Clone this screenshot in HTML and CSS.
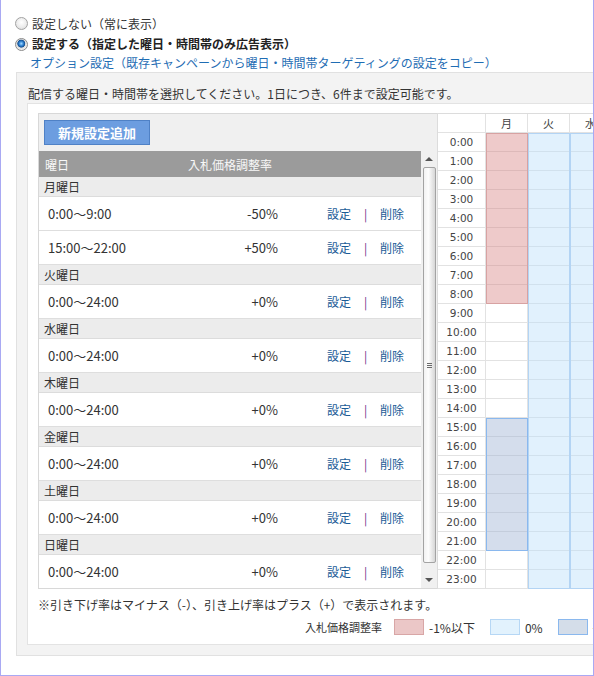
FILE: index.html
```html
<!DOCTYPE html>
<html lang="ja">
<head>
<meta charset="utf-8">
<title>曜日・時間帯設定</title>
<link rel="stylesheet" href="styles.css">
</head>
<body>
<div class="frame">
  <div class="opts">
    <label class="opt"><span class="radio"></span>設定しない（常に表示）</label>
    <label class="opt sel"><span class="radio on"></span>設定する（指定した曜日・時間帯のみ広告表示）</label>
    <a class="copy" href="#">オプション設定（既存キャンペーンから曜日・時間帯ターゲティングの設定をコピー）</a>
  </div>
  <div class="box">
    <p class="intro">配信する曜日・時間帯を選択してください。1日につき、6件まで設定可能です。</p>
    <div class="inner">
      <div class="main">
        <div class="listpanel">
          <div class="toolbar"><button class="add">新規設定追加</button></div>
          <div class="listwrap">
            <div class="list">
              <div class="lhead"><span class="lh1">曜日</span><span>入札価格調整率</span></div>
              <div class="day">月曜日</div>
              <div class="row"><span class="t">0:00〜9:00</span><span class="r">-50%</span><a class="lk" href="#">設定</a><span class="sep">|</span><a class="lk2" href="#">削除</a></div>
              <div class="row"><span class="t">15:00〜22:00</span><span class="r">+50%</span><a class="lk" href="#">設定</a><span class="sep">|</span><a class="lk2" href="#">削除</a></div>
              <div class="day">火曜日</div>
              <div class="row"><span class="t">0:00〜24:00</span><span class="r">+0%</span><a class="lk" href="#">設定</a><span class="sep">|</span><a class="lk2" href="#">削除</a></div>
              <div class="day">水曜日</div>
              <div class="row"><span class="t">0:00〜24:00</span><span class="r">+0%</span><a class="lk" href="#">設定</a><span class="sep">|</span><a class="lk2" href="#">削除</a></div>
              <div class="day">木曜日</div>
              <div class="row"><span class="t">0:00〜24:00</span><span class="r">+0%</span><a class="lk" href="#">設定</a><span class="sep">|</span><a class="lk2" href="#">削除</a></div>
              <div class="day">金曜日</div>
              <div class="row"><span class="t">0:00〜24:00</span><span class="r">+0%</span><a class="lk" href="#">設定</a><span class="sep">|</span><a class="lk2" href="#">削除</a></div>
              <div class="day">土曜日</div>
              <div class="row"><span class="t">0:00〜24:00</span><span class="r">+0%</span><a class="lk" href="#">設定</a><span class="sep">|</span><a class="lk2" href="#">削除</a></div>
              <div class="day">日曜日</div>
              <div class="row"><span class="t">0:00〜24:00</span><span class="r">+0%</span><a class="lk" href="#">設定</a><span class="sep">|</span><a class="lk2" href="#">削除</a></div>
            </div>
            <div class="sbar">
              <div class="arr"><span class="tri-up"></span></div>
              <div class="thumb"><span class="grip"></span></div>
              <div class="track"></div>
              <div class="arr"><span class="tri-dn"></span></div>
            </div>
          </div>
        </div>
        <div class="grid">
          <span class="hd"></span><span class="hd">月</span><span class="hd">火</span><span class="hd">水</span><span class="hd">木</span><span class="hd">金</span><span class="hd">土</span><span class="hd">日</span>
          <span class="tm">0:00</span><span class="c"></span><span class="c"></span><span class="c"></span><span class="c"></span><span class="c"></span><span class="c"></span><span class="c"></span>
          <span class="tm">1:00</span><span class="c"></span><span class="c"></span><span class="c"></span><span class="c"></span><span class="c"></span><span class="c"></span><span class="c"></span>
          <span class="tm">2:00</span><span class="c"></span><span class="c"></span><span class="c"></span><span class="c"></span><span class="c"></span><span class="c"></span><span class="c"></span>
          <span class="tm">3:00</span><span class="c"></span><span class="c"></span><span class="c"></span><span class="c"></span><span class="c"></span><span class="c"></span><span class="c"></span>
          <span class="tm">4:00</span><span class="c"></span><span class="c"></span><span class="c"></span><span class="c"></span><span class="c"></span><span class="c"></span><span class="c"></span>
          <span class="tm">5:00</span><span class="c"></span><span class="c"></span><span class="c"></span><span class="c"></span><span class="c"></span><span class="c"></span><span class="c"></span>
          <span class="tm">6:00</span><span class="c"></span><span class="c"></span><span class="c"></span><span class="c"></span><span class="c"></span><span class="c"></span><span class="c"></span>
          <span class="tm">7:00</span><span class="c"></span><span class="c"></span><span class="c"></span><span class="c"></span><span class="c"></span><span class="c"></span><span class="c"></span>
          <span class="tm">8:00</span><span class="c"></span><span class="c"></span><span class="c"></span><span class="c"></span><span class="c"></span><span class="c"></span><span class="c"></span>
          <span class="tm">9:00</span><span class="c"></span><span class="c"></span><span class="c"></span><span class="c"></span><span class="c"></span><span class="c"></span><span class="c"></span>
          <span class="tm">10:00</span><span class="c"></span><span class="c"></span><span class="c"></span><span class="c"></span><span class="c"></span><span class="c"></span><span class="c"></span>
          <span class="tm">11:00</span><span class="c"></span><span class="c"></span><span class="c"></span><span class="c"></span><span class="c"></span><span class="c"></span><span class="c"></span>
          <span class="tm">12:00</span><span class="c"></span><span class="c"></span><span class="c"></span><span class="c"></span><span class="c"></span><span class="c"></span><span class="c"></span>
          <span class="tm">13:00</span><span class="c"></span><span class="c"></span><span class="c"></span><span class="c"></span><span class="c"></span><span class="c"></span><span class="c"></span>
          <span class="tm">14:00</span><span class="c"></span><span class="c"></span><span class="c"></span><span class="c"></span><span class="c"></span><span class="c"></span><span class="c"></span>
          <span class="tm">15:00</span><span class="c"></span><span class="c"></span><span class="c"></span><span class="c"></span><span class="c"></span><span class="c"></span><span class="c"></span>
          <span class="tm">16:00</span><span class="c"></span><span class="c"></span><span class="c"></span><span class="c"></span><span class="c"></span><span class="c"></span><span class="c"></span>
          <span class="tm">17:00</span><span class="c"></span><span class="c"></span><span class="c"></span><span class="c"></span><span class="c"></span><span class="c"></span><span class="c"></span>
          <span class="tm">18:00</span><span class="c"></span><span class="c"></span><span class="c"></span><span class="c"></span><span class="c"></span><span class="c"></span><span class="c"></span>
          <span class="tm">19:00</span><span class="c"></span><span class="c"></span><span class="c"></span><span class="c"></span><span class="c"></span><span class="c"></span><span class="c"></span>
          <span class="tm">20:00</span><span class="c"></span><span class="c"></span><span class="c"></span><span class="c"></span><span class="c"></span><span class="c"></span><span class="c"></span>
          <span class="tm">21:00</span><span class="c"></span><span class="c"></span><span class="c"></span><span class="c"></span><span class="c"></span><span class="c"></span><span class="c"></span>
          <span class="tm">22:00</span><span class="c"></span><span class="c"></span><span class="c"></span><span class="c"></span><span class="c"></span><span class="c"></span><span class="c"></span>
          <span class="tm">23:00</span><span class="c"></span><span class="c"></span><span class="c"></span><span class="c"></span><span class="c"></span><span class="c"></span><span class="c"></span>
          <span class="blk neg" style="grid-column:2 / span 1;grid-row:2 / span 9"></span>
          <span class="blk pos" style="grid-column:2 / span 1;grid-row:17 / span 7"></span>
          <span class="blk zero" style="grid-column:3 / span 1;grid-row:2 / span 24"></span>
          <span class="blk zero" style="grid-column:4 / span 1;grid-row:2 / span 24"></span>
          <span class="blk zero" style="grid-column:5 / span 1;grid-row:2 / span 24"></span>
          <span class="blk zero" style="grid-column:6 / span 1;grid-row:2 / span 24"></span>
          <span class="blk zero" style="grid-column:7 / span 1;grid-row:2 / span 24"></span>
          <span class="blk zero" style="grid-column:8 / span 1;grid-row:2 / span 24"></span>
        </div>
      </div>
      <p class="note">※引き下げ率はマイナス（-）、引き上げ率はプラス（+）で表示されます。</p>
      <div class="legend">
        <span class="lg-label">入札価格調整率</span>
        <span class="sw sw-neg"></span><span class="lg-txt">-1%以下</span>
        <span class="sw sw-zero"></span><span class="lg-txt">0%</span>
        <span class="sw sw-pos"></span><span class="lg-txt">+1%以上</span>
      </div>
    </div>
  </div>
</div>
</body>
</html>
```

FILE: styles.css
```css
* { box-sizing: border-box; }
html, body { margin: 0; padding: 0; background: #fff; }
body {
  font-family: "Noto Sans CJK JP", "Noto Sans", sans-serif;
  font-size: 12px;
  color: #333;
}
.frame {
  width: 594px;
  height: 676px;
  border: 1px solid #a9a9f3;
  border-top: none;
  overflow: hidden;
}

/* options */
.opts { padding-top: 13px; }
.opt {
  display: flex;
  align-items: center;
  gap: 4px;
  height: 21px;
  padding-left: 14px;
  line-height: 18px;
}
.opt.sel { height: 20px; font-weight: bold; color: #222; }
.radio {
  width: 13px;
  height: 13px;
  border-radius: 50%;
  border: 1px solid #a2a2a2;
  background: radial-gradient(circle at 50% 40%, #ffffff 0, #ececec 55%, #d4d4d4 100%);
  flex: none;
}
.radio.on {
  border-color: #8a8a8a;
  background: radial-gradient(circle at 48% 42%, #a8dcff 0, #3d8fdc 22%, #124f92 42%, #dcdcdc 50%, #f2f2f2 72%, #d0d0d0 100%);
}
.copy {
  display: block;
  height: 18px;
  line-height: 18px;
  padding-left: 29px;
  color: #1f6db4;
  text-decoration: none;
}

/* outer box */
.box {
  width: 800px;
  margin-left: 15px;
  border: 1px solid #e1e1e1;
  background: #f3f3f3;
  padding: 11px 0 10px 10px;
}
.intro { margin: 0; padding-left: 1px; line-height: 19px; }
.inner {
  background: #fff;
  border: 1px solid #e3e3e3;
  padding: 9px 10px 8px;
}
.main { display: flex; align-items: flex-start; }

/* list panel */
.listpanel {
  width: 399px;
  flex: none;
  background: #f0f0f0;
  border: 1px solid #d8d8d8;
  border-right: none;
}
.toolbar { height: 37px; padding: 6px 5px; }
.add {
  display: block;
  width: 106px;
  height: 25px;
  padding: 0;
  border: 1px solid #4f81c6;
  background: #6c9de0;
  color: #fff;
  font-family: inherit;
  font-size: 13px;
  font-weight: bold;
  line-height: 23px;
  text-align: center;
}
.listwrap { display: flex; height: 437px; }
.list { width: 382px; flex: none; overflow: hidden; background: #fff; }
.lhead {
  display: flex;
  align-items: center;
  height: 26px;
  padding-left: 6px;
  background: #9b9b9b;
  color: #f8f8f8;
}
.lh1 { width: 143px; }
.day {
  height: 20px;
  line-height: 19px;
  padding-left: 5px;
  background: #ececec;
  border-bottom: 1px solid #dcdcdc;
  color: #333;
}
.row {
  display: flex;
  align-items: center;
  height: 34px;
  padding-left: 9px;
  border-bottom: 1px solid #dedede;
  font-size: 13px;
  color: #333;
}
.t { width: 150px; }
.r { width: 80px; text-align: right; }
.lk, .lk2 { color: #1a5b96; text-decoration: none; font-size: 12px; }
.lk { margin-left: 49px; }
.sep { width: 29px; text-align: center; color: #6a2f8a; font-size: 12px; }

/* fake scrollbar */
.sbar {
  width: 16px;
  flex: none;
  background: #f0f0f0;
  display: flex;
  flex-direction: column;
  align-items: center;
}
.arr { height: 16px; display: flex; align-items: center; justify-content: center; }
.tri-up {
  width: 0; height: 0;
  border-left: 4px solid transparent;
  border-right: 4px solid transparent;
  border-bottom: 4px solid #555;
}
.tri-dn {
  width: 0; height: 0;
  border-left: 4px solid transparent;
  border-right: 4px solid transparent;
  border-top: 4px solid #555;
}
.thumb {
  width: 13px;
  height: 396px;
  border: 1px solid #a3a3a3;
  border-radius: 2px;
  background: linear-gradient(to right, #f2f2f2, #fdfdfd 40%, #d6d6d6);
  display: flex;
  align-items: center;
  justify-content: center;
}
.grip {
  width: 5px;
  height: 5px;
  background: repeating-linear-gradient(to bottom, #6a6a6a 0 1px, transparent 1px 2px);
}
.track { flex: 1; }

/* schedule grid */
.grid {
  position: relative;
  flex: none;
  display: grid;
  grid-template-columns: 48px repeat(7, 42px);
  grid-auto-rows: 19px;
  border-top: 1px solid #dcdcdc;
  border-left: 1px solid #dcdcdc;
  background: #fff;
}
.hd, .tm, .c {
  border-right: 1px solid #e2e2e2;
  border-bottom: 1px solid #e2e2e2;
  text-align: center;
  line-height: 18px;
  color: #444;
}
.hd { font-size: 11px; }
.tm { font-family: "DejaVu Sans", Verdana, sans-serif; font-size: 10.5px; }
.blk {
  position: absolute;
  top: 0; left: 0; right: 0; bottom: 0;
  border: 1px solid;
}
.neg { background: rgba(214, 128, 128, 0.42); border-color: #d7a2a2; }
.pos { background: rgba(160, 180, 212, 0.45); border-color: #8ab8ee; }
.zero { background: rgba(188, 224, 250, 0.45); border-color: #b3d4f4; }

/* footer */
.note { margin: 7px 0 0; line-height: 18px; }
.legend {
  display: flex;
  align-items: center;
  height: 18px;
  margin-top: 4px;
  padding-left: 267px;
  white-space: nowrap;
}
.lg-label { font-size: 11px; margin-right: 11px; width: 78px; }
.sw { width: 30px; height: 16px; border: 1px solid; margin-right: 5px; flex: none; }
.sw-neg { background: #ebc7c7; border-color: #d8a6a6; }
.sw-zero { background: #e2f2fd; border-color: #b6d7f5; }
.sw-pos { background: #d4dde9; border-color: #8ab8ee; }
.lg-txt { margin-right: 15px; }
```
